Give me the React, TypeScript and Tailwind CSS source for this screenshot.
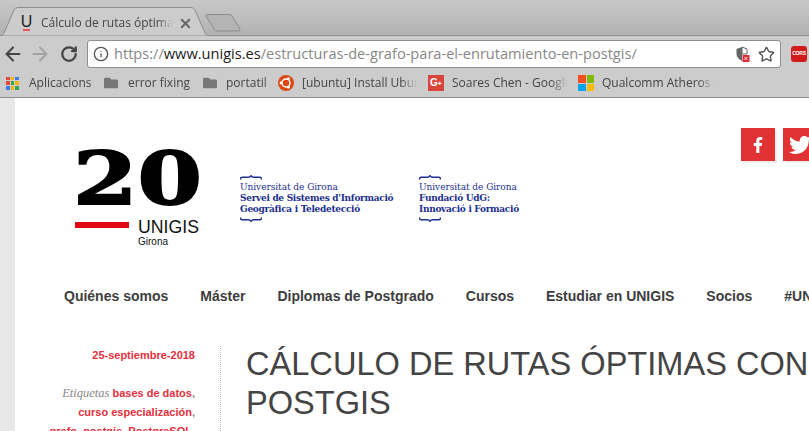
import React from "react";
import { ArrowLeft, ArrowRight, Info, RotateCw, Star, X } from "lucide-react";
import { FaFacebookF, FaTwitter, FaFolder } from "react-icons/fa";

const sans = "font-['Liberation_Sans',Arial,sans-serif]";
const ui = "font-['Open_Sans','Noto_Sans',sans-serif]";
const serif = "font-['Liberation_Serif',serif]";

const navItems = [
  "Quiénes somos",
  "Máster",
  "Diplomas de Postgrado",
  "Cursos",
  "Estudiar en UNIGIS",
  "Socios",
  "#UNIGIS",
];

function AppsIcon() {
  const colors = ["#e8453c", "#f4b400", "#3b7ded", "#e8453c", "#34a853", "#f4b400", "#3b7ded", "#f4b400", "#34a853"];
  return (
    <div className="grid grid-cols-3 gap-px w-[13px] h-[13px] shrink-0">
      {colors.map((c, i) => (
        <div key={i} style={{ backgroundColor: c }} />
      ))}
    </div>
  );
}

function Bracket({ flip }: { flip?: boolean }) {
  return (
    <svg width="22" height="5" viewBox="0 0 22 5" className={`shrink-0 ${flip ? "rotate-180" : ""}`}>
      <path d="M0.7 4.5V3.2Q0.7 2.2 2 2.2H8.5Q10 2.2 11 0.6Q12 2.2 13.5 2.2H20Q21.3 2.2 21.3 3.2V4.5" fill="none" stroke="#1c2f8f" strokeWidth="1.4" />
    </svg>
  );
}

function UniLogo({ lines, className }: { lines: string[]; className?: string }) {
  return (
    <div className={`flex flex-col ${className}`}>
      <Bracket />
      <div className="font-['DejaVu_Serif',serif] text-[#1c2f8f] text-[9px] leading-[11px] tracking-[-0.3px] py-[2px]">
        <div className="tracking-[-0.05px]">Universitat de Girona</div>
        {lines.map((l) => (
          <div key={l} className="font-bold">
            {l}
          </div>
        ))}
      </div>
      <Bracket flip />
    </div>
  );
}

function Bookmark({ icon, label, width, labelWidth, gap }: { icon: React.ReactNode; label: string; width: number; labelWidth: number; gap: number }) {
  return (
    <div className="flex items-center shrink-0" style={{ width, gap }}>
      {icon}
      <span
        className="text-[12px] text-[#444] whitespace-nowrap overflow-hidden [mask-image:linear-gradient(to_right,black_85%,transparent)]"
        style={{ width: labelWidth }}
      >
        {label}
      </span>
    </div>
  );
}

export default function App() {
  return (
    <div className={`w-[809px] h-[431px] overflow-hidden bg-white flex flex-col ${ui}`}>
      {/* Tab strip */}
      <div className="relative h-[36px] shrink-0 bg-gradient-to-b from-[#c8c8c8] to-[#b2b2b2] border-b border-[#8e8e8e]">
        <svg width="250" height="36" className="absolute left-0 top-0">
          <path d="M208 14.5 L229 14.5 Q231 14.5 232 16 L240 29 Q240.5 31 238 31 L217 31 Q215 31 214 29 L206 16 Q206 14.5 208 14.5Z" fill="#b4b4b4" stroke="#8c8c8c" />
          <path d="M0 35.5 L1 35.5 Q3 35.5 4 33 L14 10 Q15 7.5 18 7.5 L191 7.5 Q194 7.5 195 10 L205 33 Q206 35.5 209 35.5 L212 35.5" fill="#cccccc" stroke="#8e8e8e" />
        </svg>
        <div className="absolute left-[21px] top-[15px] flex items-center h-[16px]">
          <div className="flex flex-col items-center w-[11px] shrink-0">
            <span className={`${sans} text-[16px] leading-[13px] text-[#222]`}>U</span>
            <div className="w-[7px] h-[2px] mt-[1px] bg-[#e0555a]" />
          </div>
          <span className="ml-[9px] text-[12px] text-[#444] whitespace-nowrap w-[132px] overflow-hidden [mask-image:linear-gradient(to_right,black_88%,transparent)]">
            Cálculo de rutas óptima
          </span>
          <X size={15} strokeWidth={3} className="ml-[5px] text-[#666] shrink-0" />
        </div>
      </div>

      {/* Toolbar */}
      <div className="h-[33px] shrink-0 bg-[#cccccc] flex items-start pt-[4px] pl-[2px]">
        <ArrowLeft size={22} strokeWidth={2.2} className="text-[#444] shrink-0 mt-[3px]" />
        <ArrowRight size={22} strokeWidth={2.2} className="ml-[5px] text-[#a3a3a3] shrink-0 mt-[3px]" />
        <RotateCw size={18} strokeWidth={3} className="ml-[9px] text-[#444] shrink-0 mt-[5px]" />
        <div className="ml-[9px] h-[28px] w-[694px] shrink-0 bg-white rounded-[3px] border border-[#8f8f8f] flex items-center pl-[5px] pr-[5px]">
          <Info size={16} strokeWidth={2} className="text-[#555] shrink-0" />
          <span className="ml-[5px] text-[14.6px] text-[#888] whitespace-nowrap">
            https://<span className="text-[#222]">www.unigis.es</span>/estructuras-de-grafo-para-el-enrutamiento-en-postgis/
          </span>
          <div className="ml-auto flex items-center gap-[8px]">
            <svg width="14" height="16" viewBox="0 0 14 16">
              <path d="M6 1L0.5 3V8Q0.5 12 6 15Z" fill="#666" />
              <path d="M6 1L11 3V8H6Z" fill="none" stroke="#666" />
              <rect x="6.5" y="9" width="7" height="7" fill="#d9303a" />
              <path d="M8.5 11.2l2.6 2.6m0-2.6l-2.6 2.6" stroke="#fff" />
            </svg>
            <Star size={17} strokeWidth={2} className="text-[#555]" />
          </div>
        </div>
        <div className="ml-[10px] mt-[6px] w-[16px] h-[16px] shrink-0 rounded-[3px] bg-[#d01c1c] flex items-center justify-center overflow-hidden">
          <span className={`${sans} text-[5px] tracking-[-0.2px] font-bold text-white`}>CORS</span>
        </div>
      </div>

      {/* Bookmarks */}
      <div className="h-[29px] shrink-0 bg-[#cccccc] border-b border-[#8e8e8e] flex items-center pl-[6px] overflow-hidden">
        <Bookmark icon={<AppsIcon />} gap={10} label="Aplicacions" width={98} labelWidth={70} />
        <Bookmark icon={<FaFolder size={14} className="text-[#777] shrink-0" />} gap={10} label="error fixing" width={99} labelWidth={70} />
        <Bookmark icon={<FaFolder size={14} className="text-[#777] shrink-0" />} gap={9} label="portatil" width={75} labelWidth={45} />
        <Bookmark
          icon={
            <svg width="16" height="16" viewBox="0 0 16 16" className="shrink-0">
              <circle cx="8" cy="8" r="8" fill="#dd4814" />
              <circle cx="8" cy="8" r="4" fill="none" stroke="#fff" strokeWidth="1.5" />
              <circle cx="3" cy="8" r="1.4" fill="#fff" />
              <circle cx="10.5" cy="3.7" r="1.4" fill="#fff" />
              <circle cx="10.5" cy="12.3" r="1.4" fill="#fff" />
            </svg>
          }
          gap={8}
          label="[ubuntu] Install Ubuntu"
          width={150}
          labelWidth={116}
        />
        <Bookmark
          icon={
            <div className={`${sans} w-[16px] h-[16px] bg-[#d9453a] text-white font-bold flex items-center justify-center shrink-0`}>
              <span className="text-[10px] leading-none">G</span>
              <span className="text-[7px] leading-none">+</span>
            </div>
          }
          gap={8}
          label="Soares Chen - Google"
          width={150}
          labelWidth={116}
        />
        <Bookmark
          icon={
            <div className="grid grid-cols-2 gap-px w-[16px] h-[16px] shrink-0">
              <div className="bg-[#f25022]" />
              <div className="bg-[#7fba00]" />
              <div className="bg-[#00a4ef]" />
              <div className="bg-[#ffb900]" />
            </div>
          }
          gap={8}
          label="Qualcomm Atheros Inc"
          width={150}
          labelWidth={113}
        />
      </div>

      {/* Page */}
      <div className="flex flex-1 min-h-0">
        <div className="w-[15px] shrink-0 bg-[#e8e8e8]" />
        <div className={`flex-1 min-w-0 ${sans} overflow-hidden`}>
          {/* Header */}
          <div className="h-[171px] flex">
            <div className="ml-[60px] mt-[50px] w-[126px] shrink-0">
              <svg width="126" height="100" viewBox="0 0 126 100">
                <text x="-2" y="56" fontFamily="'DejaVu Serif', serif" fontWeight="700" fontSize="72" textLength="129" lengthAdjust="spacingAndGlyphs" fill="#000" stroke="#000" strokeWidth="1.8">
                  20
                </text>
                <rect x="0" y="74" width="54" height="6" fill="#e30613" />
                <text x="63" y="85" fontFamily="'Liberation Sans', sans-serif" fontSize="17.7" fill="#111">
                  UNIGIS
                </text>
                <text x="63" y="97" fontFamily="'Liberation Sans', sans-serif" fontSize="10" fill="#111">
                  Girona
                </text>
              </svg>
            </div>
            <UniLogo className="ml-[39px] mt-[77px] w-[170px] shrink-0" lines={["Servei de Sistemes d'Informació", "Geogràfica i Teledetecció"]} />
            <UniLogo className="ml-[9px] mt-[77px] w-[130px] shrink-0" lines={["Fundació UdG:", "Innovació i Formació"]} />
            <div className="ml-[192px] mt-[30px] flex gap-[8px] shrink-0">
              <div className="w-[34px] h-[33px] shrink-0 bg-[#e03232] shadow-[2px_2px_0_#eee] flex items-center justify-center">
                <FaFacebookF size={16} className="text-white" />
              </div>
              <div className="w-[34px] h-[33px] shrink-0 bg-[#e03232] shadow-[2px_2px_0_#eee] flex items-center justify-center">
                <FaTwitter size={22} className="text-white" />
              </div>
            </div>
          </div>

          {/* Nav */}
          <div className="h-[77px] flex items-start pl-[49px] gap-[32px] whitespace-nowrap text-[14px] font-bold text-[#3d3d3d] leading-[16px] pt-[19px]">
            {navItems.map((n) => (
              <span key={n}>{n}</span>
            ))}
          </div>

          {/* Body */}
          <div className="flex">
            <div className="w-[180px] shrink-0 text-right text-[11px] leading-[19px] font-bold text-[#e4303c]">
              <div>25-septiembre-2018</div>
              <div className="mt-[19px]">
                <span className={`${serif} italic font-normal text-[#888] text-[12.5px]`}>Etiquetas</span> bases de datos<span className="text-[#888]">,</span>
              </div>
              <div>
                curso especialización<span className="text-[#888]">,</span>
              </div>
              <div className="whitespace-nowrap">
                grafo<span className="text-[#888]">,</span> postgis<span className="text-[#888]">,</span> PostgreSQL<span className="text-[#888]">,</span>
              </div>
            </div>
            <div className="ml-[25px] border-l border-dotted border-[#bbb] pl-[25px] flex-1 min-w-0">
              <h1 className="-mt-[2px] text-[32.6px] leading-[39px] font-normal text-[#444] whitespace-nowrap">
                CÁLCULO DE RUTAS ÓPTIMAS CON
                <br />
                POSTGIS
              </h1>
            </div>
          </div>
        </div>
      </div>
    </div>
  );
}
